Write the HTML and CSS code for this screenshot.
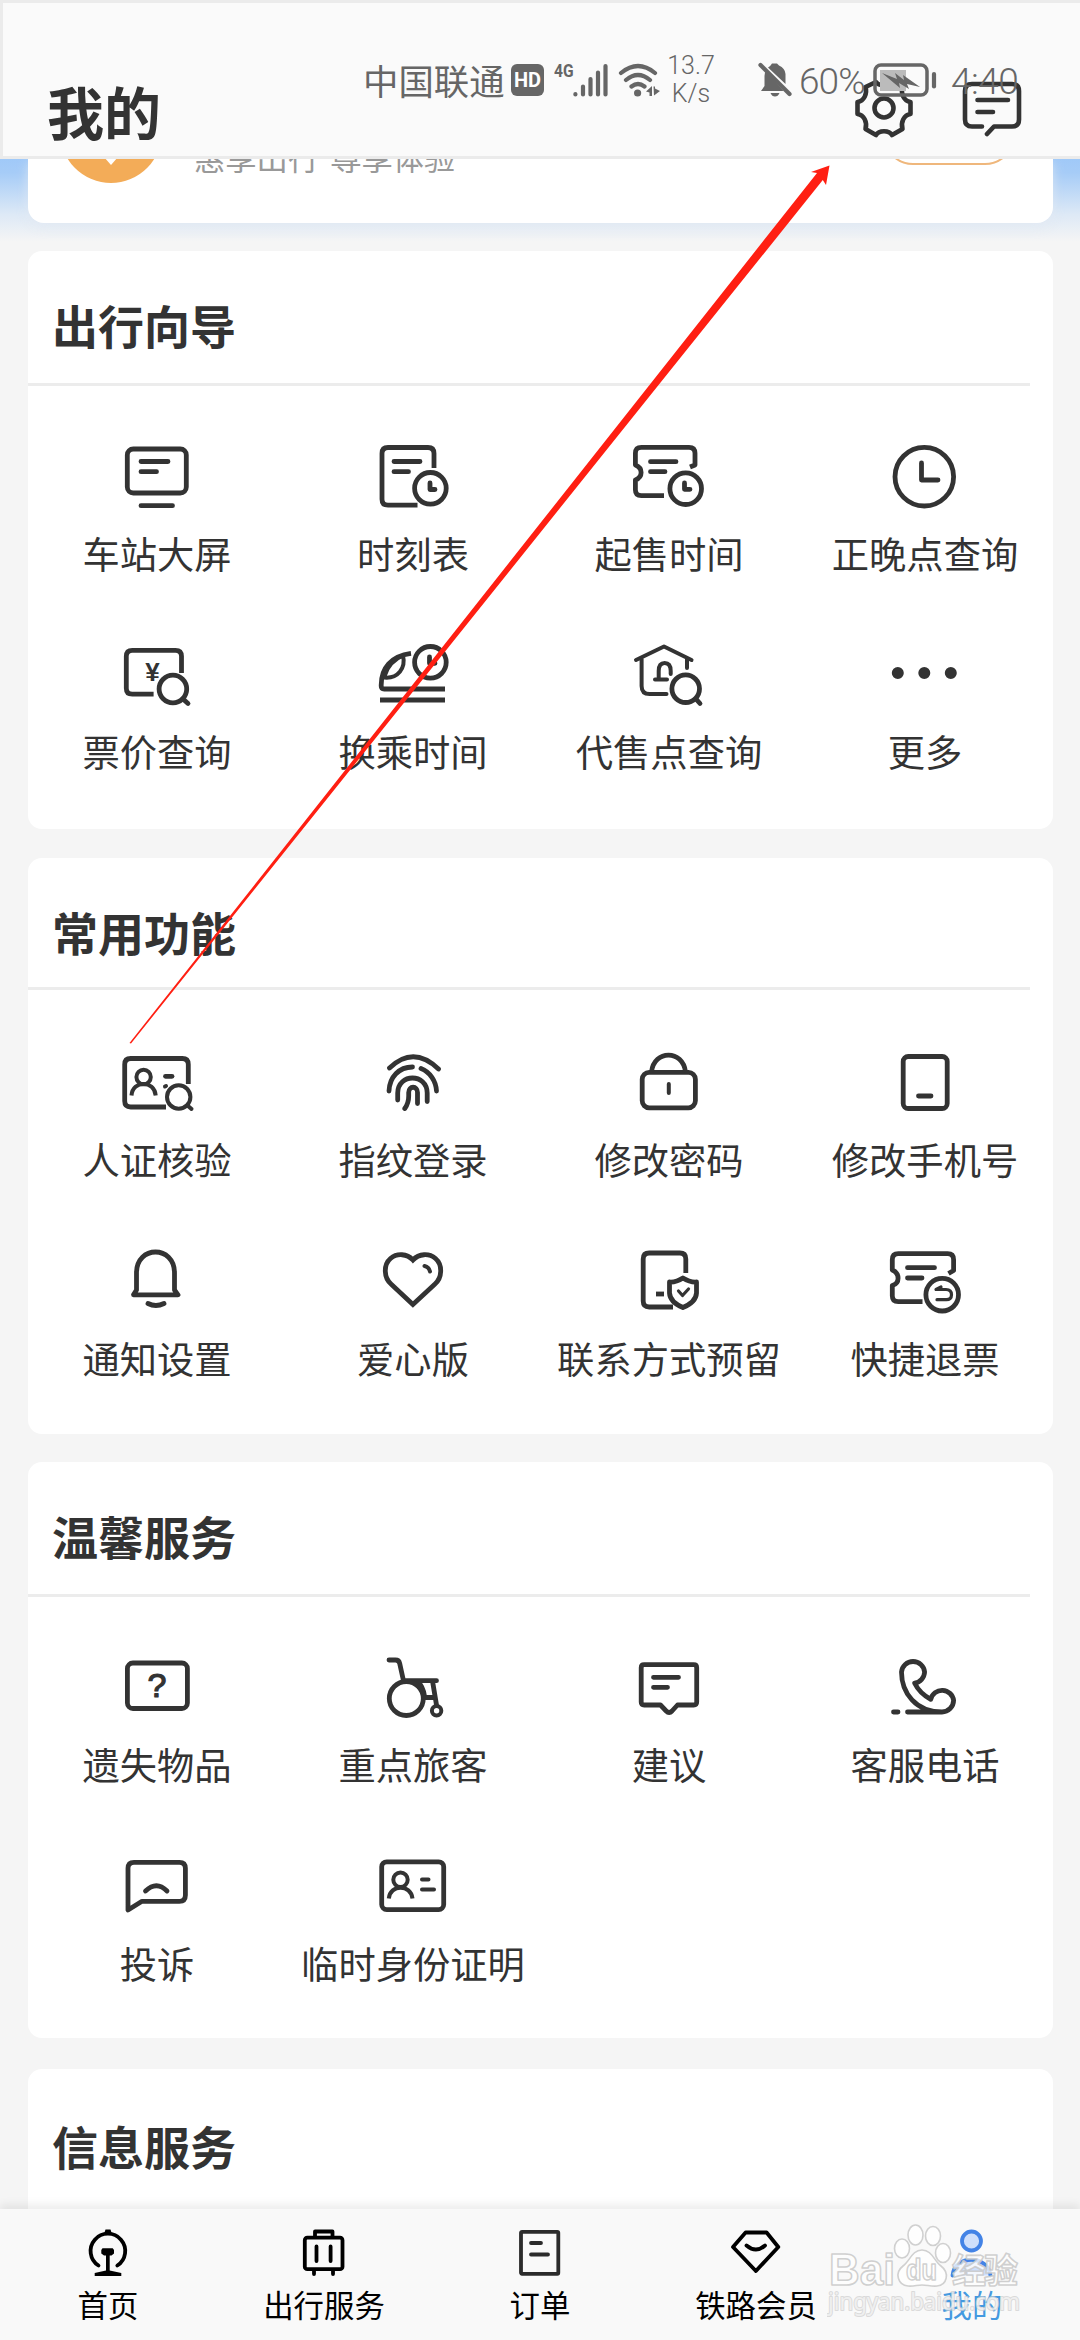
FILE: index.html
```html
<!DOCTYPE html>
<html lang="zh-CN">
<head>
<meta charset="utf-8">
<title>我的</title>
<link rel="stylesheet" href="styles.css">
</head>
<body>
<div class="screen">
  <header class="topbar">
    <h1 class="topbar-title">我的</h1>
    <div class="topbar-actions">
      <svg class="action-icon" viewBox="0 0 64 64"><path d="M24 6C27 10.500 37 10.500 40 6L50.500 11C48.500 18 52 25 58.500 26V38C52 39 48.500 46 50.500 53L40 59C37 54 27 54 24 59L13.500 53C15.500 46 12 39 5.500 38V26C12 25 15.500 18 13.500 11Z"/><circle cx="32" cy="32" r="9.500"/></svg>
      <svg class="action-icon" viewBox="0 0 64 64"><path d="M22 50.500H12Q5 50.500 5 43.500V15Q5 8 12 8H52Q59 8 59 15V43.500Q59 50.500 52 50.500H34L27 58M17.500 24H48M17.500 36H33"/></svg>
    </div>
    <div class="status">
      <span class="carrier">中国联通</span>
      <span class="hd">HD</span>
      <span class="net">4G</span>
      <svg class="signal" viewBox="0 0 36 34"><path d="M2.400 31V31.500M10 23.500V31.500M17.500 16V31.500M25 9.500V31.500M32.500 3V31.500"/></svg>
      <svg class="wifi" viewBox="0 0 44 34"><path d="M3 10Q20 -4 37 10M8 17Q20 7 32 17M13.500 23.500Q20 18.500 26.500 23.500"/><path class="solid" d="M16 30a3.600 3.600 0 1 0 7.200 0a3.600 3.600 0 1 0 -7.200 0ZM28 28.500L34 23V33H31.500V29.500ZM35.500 23.500H37V25.500L42 28L36 32.500Z"/></svg>
      <span class="speed">13.7<br>K/s</span>
      <svg class="mute" viewBox="0 0 34 36"><path class="solid" d="M8 8.500L25.500 29H3L6.500 24V14Q6.500 11 8 8.500ZM10 5.500Q13 3.500 14 1.500H19L21 3.500Q27 6 27.500 12V22ZM12.500 31H21.500Q20 34.500 17 34.500T12.500 31Z"/><path d="M2.500 3L31.500 32"/></svg>
      <span class="percent">60%</span>
      <svg class="battery" viewBox="0 0 66 34"><rect class="level" x="7" y="7" width="26" height="21"/><rect x="2" y="2" width="52" height="30" rx="6"/><path class="solid" d="M9 10L24 16L22 10L31 17L30 12L47 24L34 21L36 26L26 20L27 25Z"/><path class="cap" d="M61 11V23.500"/></svg>
      <span class="time">4:40</span>
    </div>
  </header>

  <main>
    <section class="promo">
      <div class="promo-card">
        <div class="medal"><span class="medal-mark"></span></div>
        <p class="promo-text">惠享出行 尊享体验</p>
        <span class="promo-button"></span>
      </div>
    </section>

    <section class="card guide">
      <h2 class="card-title">出行向导</h2>
      <div class="grid">
        <div class="item"><svg viewBox="0 0 80 72"><rect x="10.300" y="8" width="59" height="44" rx="6"/><path d="M24 20.500H51M24 30.700H39.500M24 64.700H55.500"/></svg><span>车站大屏</span></div>
        <div class="item"><svg viewBox="0 0 80 72"><path class="butt" d="M44.500 64.200H15Q9 64.200 9 58.200V12.500Q9 6.500 15 6.500H55Q61 6.500 61 12.500V27"/><path d="M21 20.500H47M21 30.700H35.500"/><circle cx="57.400" cy="47.300" r="15.800"/><path d="M57 42V48.500H62"/></svg><span>时刻表</span></div>
        <div class="item"><svg viewBox="0 0 80 72"><path class="butt" d="M61 26L66 24V12.300Q66 6.300 60 6.300H12.400Q6.400 6.300 6.400 12.300V24C14 27 14 36 6.400 39V48.700Q6.400 54.700 12.400 54.700H35"/><path d="M21.500 20.700H47M21.500 30.700H36"/><circle cx="56.700" cy="47.700" r="15.800"/><path d="M55.500 42V48.300H61"/></svg><span>起售时间</span></div>
        <div class="item"><svg viewBox="0 0 80 72"><circle cx="39.300" cy="35.700" r="29.300"/><path d="M36.500 22V39H53"/></svg><span>正晚点查询</span></div>
        <div class="item"><svg viewBox="0 0 80 72"><path class="butt" d="M36.600 55.200H15.300Q9.300 55.200 9.300 49.200V17.300Q9.300 11.300 15.300 11.300H58.500Q64.500 11.300 64.500 17.300V34"/><text x="35.500" y="42" class="glyph yen">¥</text><circle cx="55.900" cy="50" r="13.800"/><path d="M66 60L71 64.500"/></svg><span>票价查询</span></div>
        <div class="item"><svg viewBox="0 0 80 72"><path class="butt" d="M38 14.300C18 17 8.200 29 8.200 46V47Q8.200 50 11.200 50H72M7 61H72"/><path class="thin" d="M11 38.500C25 40 33 29 30 16.500C22 20 15 27 12 36"/><circle cx="57.400" cy="23.300" r="15.800"/><path d="M56.500 18V24.300H62"/></svg><span>换乘时间</span></div>
        <div class="item"><svg viewBox="0 0 80 72"><path class="thin" d="M7 21L35 7.500L62.500 21M12.600 19V47Q12.600 55 20.600 55H37.500M58 19V29M26 40.500H38M29.700 40V32Q29.700 24 35.700 24T41.700 32V35"/><circle cx="56.700" cy="49.700" r="13.800"/><path d="M67 60L71 64.500"/></svg><span>代售点查询</span></div>
        <div class="item"><svg viewBox="0 0 80 72"><path class="dots" d="M12.800 34h0M39.300 34h0M65.800 34h0"/></svg><span>更多</span></div>
      </div>
    </section>

    <section class="card common">
      <h2 class="card-title">常用功能</h2>
      <div class="grid">
        <div class="item"><svg viewBox="0 0 80 72"><path class="butt" d="M49 60H13.700Q7.700 60 7.700 54V17.500Q7.700 11.500 13.700 11.500H65.300Q71.300 11.500 71.300 17.500V37"/><circle class="thin" cx="26.600" cy="30" r="7.200"/><path class="thin butt" d="M14.500 48.500C15.500 33 37.500 33 38.700 48.500"/><path d="M48.500 29.300H55"/><path class="thin" d="M48 39.500L49 39"/><circle class="thin" cx="61.700" cy="50" r="11.700"/><path class="thin" d="M70.500 58.500L74.500 62"/></svg><span>人证核验</span></div>
        <div class="item"><svg viewBox="0 0 80 72"><path d="M16.500 21Q40.500 -2 65.500 22M16 44C16.500 30 26 20 39.500 20M48 21.500C57 25 63 34 63.500 44M24.700 53V46C25 26 54 26 54.200 46V54.500M44.500 56.500V45.500C44.500 38.500 35.700 38.500 35.700 45.500V49C35.700 55 34 58.500 31.800 61.500"/></svg><span>指纹登录</span></div>
        <div class="item"><svg viewBox="0 0 80 72"><rect x="13.200" y="25.300" width="53.200" height="35.500" rx="7"/><path class="butt" d="M22.500 25C25 2.500 54 2.500 56.500 25"/><path class="thin" d="M39.800 37V46"/></svg><span>修改密码</span></div>
        <div class="item"><svg viewBox="0 0 80 72"><rect x="18.200" y="9.500" width="44" height="52" rx="5"/><path d="M33.500 49H46"/></svg><span>修改手机号</span></div>
        <div class="item"><svg viewBox="0 0 80 72"><path d="M19.500 44V27C19.500 -1 57.500 -1 57.500 27V44L61 48.800H16.500Z"/><path d="M31 57.500Q38.800 61.500 47 57.500"/></svg><span>通知设置</span></div>
        <div class="item"><svg viewBox="0 0 80 72"><path class="miter" d="M39.900 58.500L18 38C11 32 10 19 17.500 12.500C24 7 34 7.500 39.900 14C46 7.500 56 7 62.500 12.500C70 19 69 32 62 38Z"/><path class="thin" d="M51.500 20Q56 21 57 25.500"/></svg><span>爱心版</span></div>
        <div class="item"><svg viewBox="0 0 80 72"><path class="butt" d="M44 61H20.200Q14.200 61 14.200 55V13Q14.200 7 20.200 7H50.800Q56.800 7 56.800 13V27"/><path class="butt" d="M27 48H35"/><path d="M53.900 32Q47 36.500 40.500 36V47Q41 56 53.900 61.500Q67 56 67.500 47V36Q61 36.500 53.900 32Z"/><path class="hair" d="M49.500 45L53.500 49.500L59.500 43"/></svg><span>联系方式预留</span></div>
        <div class="item"><svg viewBox="0 0 80 72"><path class="butt" d="M63.500 27.500L68.600 24.500V13.700Q68.600 7.700 62.600 7.700H13.300Q7.300 7.700 7.300 13.700V24C15 27.500 15 37 7.300 39.500V49.700Q7.300 55.700 13.300 55.700H37.500"/><path d="M22.500 21.700H49.500M22.500 32H37"/><circle cx="57.200" cy="48.700" r="16.300"/><path class="hair" d="M56 41L51 43.500H61Q66.500 43.500 66.500 48.700T61 53.700H52"/></svg><span>快捷退票</span></div>
      </div>
    </section>

    <section class="card care">
      <h2 class="card-title">温馨服务</h2>
      <div class="grid">
        <div class="item"><svg viewBox="0 0 80 72"><rect x="10.400" y="11" width="60" height="45.500" rx="5.500"/><text x="40" y="45" class="glyph ask">?</text></svg><span>遗失物品</span></div>
        <div class="item"><svg viewBox="0 0 80 72"><path d="M16 8H22.500Q26 8 26.700 11.500L30.500 28.700H63.500M59.500 29L63.500 53M52 45.500H61M45 30Q50 34 51.500 44"/><circle cx="33.300" cy="46.500" r="17"/><circle class="thin" cx="63.600" cy="58.800" r="4.700"/></svg><span>重点旅客</span></div>
        <div class="item"><svg viewBox="0 0 80 72"><path d="M15.200 12.700H64.700Q67.700 12.700 67.700 15.700V50Q67.700 53 64.700 53H48.500L43 59Q40.100 62 37.200 59L31.500 53H15.200Q12.200 53 12.200 50V15.700Q12.200 12.700 15.200 12.700ZM24.500 25.300H49.500M24.500 35.300H38.500"/></svg><span>建议</span></div>
        <div class="item"><svg viewBox="0 0 80 72"><path d="M29.700 31.200A11.800 11.800 0 0 0 39.600 20A11.600 11.600 0 0 0 16.500 20C16.500 41 31 60 57 60A11.800 11.800 0 0 0 68.600 48.400A11.600 11.600 0 0 0 45.800 47.300C38 43 33 38 29.700 31.200ZM57 60H22.500M8.500 60H13"/></svg><span>客服电话</span></div>
        <div class="item"><svg viewBox="0 0 80 72"><path d="M11 59V17.300Q11 11.300 17 11.300H62.400Q68.400 11.300 68.400 17.300V44.300Q68.400 50.300 62.400 50.300H25Z"/><path d="M28.500 40Q39.500 29.500 50 40"/></svg><span>投诉</span></div>
        <div class="item"><svg viewBox="0 0 80 72"><rect x="8.700" y="10.800" width="62" height="47.800" rx="5"/><circle class="thin" cx="27.500" cy="28.800" r="7.200"/><path class="thin butt" d="M15.800 47.500C17 33 38 33 39.500 47.500"/><path class="thin" d="M49 28.500H55.500M49 38.500H61"/></svg><span>临时身份证明</span></div>
      </div>
    </section>

    <section class="card info">
      <h2 class="card-title">信息服务</h2>
    </section>
  </main>

  <nav class="tabs">
    <div class="tab"><svg viewBox="0 0 56 56"><path d="M18.500 40.500A17.300 17.300 0 1 1 37.300 40.500"/><path class="solid" d="M24 9L25.500 4.500H30.500L32 9ZM22.500 23.300H32.700L34 25V28.500L31.500 30.500H29.700V45.500L41.300 48V51H14.700V48L26 45.500V30.500H24L21.300 28.500V25Z"/></svg><span>首页</span></div>
    <div class="tab"><svg viewBox="0 0 56 56"><rect x="8.800" y="12.700" width="37.700" height="31.500" rx="2.500"/><path d="M19 12V6.500H36.500V12M20.500 21.500V36M34.600 21.500V36M18 45V49M37 45V49"/></svg><span>出行服务</span></div>
    <div class="tab"><svg viewBox="0 0 56 56" class="soft"><rect x="9" y="6.800" width="37.300" height="42" rx="1"/><path d="M19 18H29M19 29.500H36"/></svg><span>订单</span></div>
    <div class="tab"><svg viewBox="0 0 56 56"><path d="M17.600 7.500H38.600L50.300 22L27.900 46L5 22ZM18.500 20.500Q28 28.500 37 20.500"/></svg><span>铁路会员</span></div>
    <div class="tab active"><svg viewBox="0 0 56 56"><circle cx="27.500" cy="16" r="9.500"/><path class="butt" d="M8.500 50.500C10 29.500 44.500 29.500 46.500 50.500"/></svg><span>我的</span></div>
  </nav>

  <svg class="watermark" viewBox="0 0 200 100">
    <text x="2" y="65" textLength="66" lengthAdjust="spacingAndGlyphs" class="wm-brand">Bai</text>
    <g class="paw"><ellipse cx="75" cy="28.500" rx="7.500" ry="9.500"/><ellipse cx="88.500" cy="15" rx="7.500" ry="10"/><ellipse cx="106" cy="16" rx="7.500" ry="9.500"/><ellipse cx="116" cy="33" rx="7.500" ry="9.500"/><path d="M95 30C85 30 83 41 76 46C67 53 71 65 81 66C87 66.500 90 65 95 65C100 65 104 66.500 110 66C120 65 123 53 114 46C107 41 105 30 95 30Z"/></g>
    <text x="79" y="60" textLength="31" lengthAdjust="spacingAndGlyphs" class="wm-du">du</text>
    <text x="125" y="63" textLength="66" class="wm-cn">经验</text>
    <text x="1" y="90" textLength="192" lengthAdjust="spacingAndGlyphs" class="wm-url">jingyan.baidu.com</text>
  </svg>
  <svg class="pointer" viewBox="0 0 1080 2340"><polygon points="129.500,1043 817,173 811,172 829.500,165.500 826,185 822.800,180 131,1043.500"/></svg>
</div>
</body>
</html>
```
FILE: styles.css
```css
* { box-sizing: border-box; }
body {
  margin: 0;
  background: #f5f5f5;
  color: #333;
  font-family: "Noto Sans CJK SC", "Noto Sans", sans-serif;
}
h1, h2, p { margin: 0; }
.screen {
  position: relative;
  width: 1080px;
  height: 2340px;
  overflow: hidden;
  display: flex;
  flex-direction: column;
}
svg {
  display: block;
  fill: none;
  stroke: #333;
  stroke-width: 4.8;
  stroke-linecap: round;
  stroke-linejoin: round;
}
.solid { fill: currentColor; stroke: none; }

/* top bar */
.topbar {
  position: relative;
  flex: none;
  height: 159px;
  padding: 0 54px 0 44px;
  background: #fafafa;
  border: 3px solid #ebebeb;
  border-right: 0;
  display: flex;
  justify-content: space-between;
}
.topbar-title {
  margin-top: 67px;
  font-size: 57px;
  line-height: 80px;
  font-weight: 700;
}
.topbar-actions {
  display: flex;
  gap: 44px;
  margin: 73px 2px 0 0;
}
.action-icon { width: 64px; height: 64px; stroke-width: 4.6; }
.status {
  position: absolute;
  left: 360px;
  top: 52px;
  height: 50px;
  display: flex;
  align-items: center;
  color: #666;
  font-family: Roboto, "Noto Sans CJK SC", sans-serif;
  white-space: nowrap;
}
.status svg { flex: none; stroke: #666; stroke-width: 4.2; }
.carrier { width: 142px; font-size: 35.400px; line-height: 50px; font-family: "Noto Sans CJK SC", sans-serif; }
.hd {
  width: 33px;
  height: 32px;
  margin-left: 6px;
  border-radius: 6px;
  background: #666;
  color: #fff;
  font-size: 20px;
  font-weight: 700;
  line-height: 33px;
  text-align: center;
}
.net {
  margin: -18px 0 0 10px;
  width: 20px;
  font-size: 19px;
  font-weight: 700;
  line-height: 20px;
  transform: scaleX(.82);
  transform-origin: left;
}
.signal { width: 36px; height: 34px; margin-left: -1px; }
.wifi { width: 44px; height: 34px; margin-left: 9px; }
.speed {
  width: 50px;
  margin-left: 4px;
  font-size: 25px;
  line-height: 28px;
  font-weight: 350;
  text-align: center;
}
.mute { width: 34px; height: 36px; margin-left: 42px; }
.percent { width: 71px; margin-left: 7px; font-size: 37px; font-weight: 350; letter-spacing: -.9px; padding-top: 2px; }
.battery { width: 66px; height: 34px; margin-left: 3px; }
.battery rect { stroke-width: 3.5; }
.battery .level { fill: #bbb; stroke: none; }
.time { margin-left: 12px; font-size: 37px; font-weight: 350; letter-spacing: -.5px; padding-top: 2px; }

/* membership strip under the bar */
main { flex: 1; min-height: 0; overflow: hidden; }
.promo {
  height: 92px;
  padding: 0 27px 0 28px;
  background: linear-gradient(#a0c9f8, #a6ccf7 15%, #dde9f6 60%, #f5f5f5 90%);
}
.promo-card {
  height: 64px;
  padding: 0 46px 0 32px;
  background: #fff;
  border-radius: 0 0 16px 16px;
  box-shadow: 0 4px 12px rgba(225, 232, 242, .8);
  display: flex;
  overflow: hidden;
}
.medal {
  width: 102px;
  height: 102px;
  margin-top: -78px;
  border-radius: 50%;
  background: #f3ac58;
  flex: none;
}
.medal-mark {
  display: block;
  width: 14px;
  height: 8px;
  margin: 76px auto 0;
  background: #fff;
  clip-path: polygon(0 0, 100% 0, 50% 100%);
}
.promo-text {
  margin: -25px auto 0 32px;
  font-size: 31.300px;
  line-height: 46px;
  color: #999;
  word-spacing: 4px;
}
.promo-button {
  width: 132px;
  height: 60px;
  margin-top: -54px;
  margin-right: -8px;
  border: 2px solid #efb77c;
  border-radius: 30px;
}

/* service cards */
.card {
  width: 1025px;
  height: 576px;
  margin: 0 0 28px 28px;
  background: #fff;
  border-radius: 14px;
}
.card-title {
  height: 135px;
  margin-right: 23px;
  padding: 43px 0 0 24px;
  border-bottom: 3px solid #ececec;
  font-size: 46px;
  line-height: 60px;
  font-weight: 700;
}
.grid {
  display: grid;
  grid-template-columns: repeat(4, 256px);
  row-gap: 63px;
  padding: 55px 0 0 1px;
}
.item { height: 136px; display: flex; flex-direction: column; align-items: center; }
.item svg { width: 80px; height: 72px; flex: none; }
.item span {
  margin-top: 16px;
  font-size: 37.300px;
  line-height: 48px;
  white-space: nowrap;
}
.item .butt { stroke-linecap: butt; }
.item .thin { stroke-width: 4; }
.item .hair { stroke-width: 3.2; }
.item .miter { stroke-linejoin: miter; }
.item .dots { stroke-width: 12; }
.glyph { fill: #333; stroke: none; text-anchor: middle; font-family: "Liberation Sans", sans-serif; font-weight: 700; }
.yen { font-size: 26px; }
.ask { font-size: 34px; font-weight: 400; stroke: #333; stroke-width: 1.2; }
.guide { height: 578px; margin-bottom: 29px; }
.guide .grid { row-gap: 62px; }
.common .card-title { height: 132px; }
.common .grid { padding-top: 57px; }
.care { margin-bottom: 31px; }
.info { margin-bottom: 0; }
.info .card-title { padding-top: 46px; border: 0; }

/* bottom tabs */
.tabs {
  position: relative;
  flex: none;
  height: 131px;
  background: #f9f9f9;
  box-shadow: 0 -5px 8px rgba(0, 0, 0, .07);
  display: grid;
  grid-template-columns: repeat(5, 216px);
}
.tab {
  padding-top: 16px;
  display: flex;
  flex-direction: column;
  align-items: center;
  color: #000;
  font-size: 30.400px;
  line-height: 40px;
}
.tab svg { width: 56px; height: 56px; stroke: #000; stroke-width: 3.8; }
.tab span { margin-top: 2px; padding-top: 1px; }
.tab .soft { stroke: #2b2b2b; }
.active { color: #4499e0; }
.active svg { stroke: #4383e6; fill: #cfdffb; }

/* overlays */
.watermark {
  position: absolute;
  left: 827px;
  top: 2220px;
  width: 200px;
  height: 100px;
  fill: rgba(255, 255, 255, .75);
  stroke: rgba(200, 200, 200, .85);
  stroke-width: 1.6;
}
.watermark text { font-family: "Liberation Sans", sans-serif; font-weight: 700; }
.watermark .wm-brand { font-size: 45px; }
.watermark .wm-du { font-size: 29px; }
.watermark .wm-cn { font-size: 34px; font-family: "Noto Sans CJK SC", sans-serif; }
.watermark .wm-url {
  font-size: 23px;
  font-weight: 400;
  font-family: "Noto Sans", sans-serif;
  fill: rgba(255, 255, 255, .6);
  stroke: rgba(205, 205, 205, .7);
  stroke-width: 2;
  paint-order: stroke;
}
.pointer { position: absolute; left: 0; top: 0; width: 1080px; height: 2340px; pointer-events: none; }
.pointer polygon { fill: #ff1f12; stroke: none; }
```
